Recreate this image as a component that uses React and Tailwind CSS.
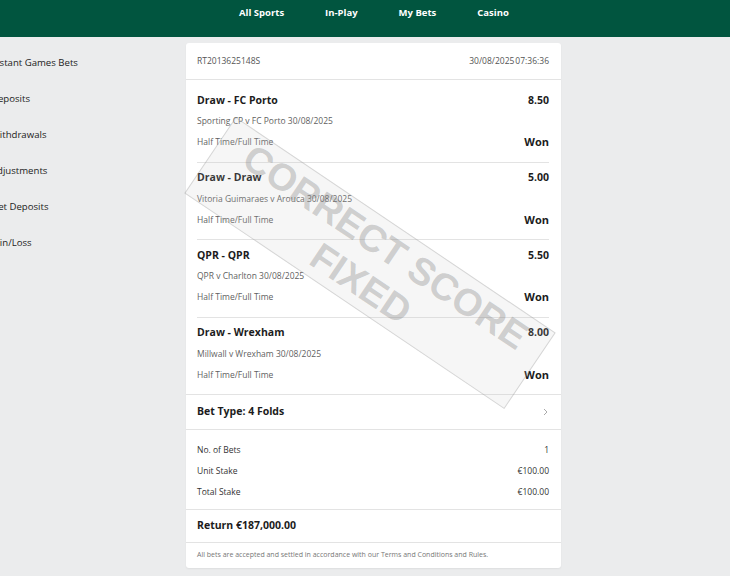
export default function App() {
  const legs = [
    { sel: "Draw - FC Porto", odds: "8.50", ev: "Sporting CP v FC Porto 30/08/2025" },
    { sel: "Draw - Draw", odds: "5.00", ev: "Vitoria Guimaraes v Arouca 30/08/2025" },
    { sel: "QPR - QPR", odds: "5.50", ev: "QPR v Charlton 30/08/2025" },
    { sel: "Draw - Wrexham", odds: "8.00", ev: "Millwall v Wrexham 30/08/2025" },
  ];
  const side = ["Instant Games Bets", "Deposits", "Withdrawals", "Adjustments", "Net Deposits", "Win/Loss"];
  const nav = ["All Sports", "In-Play", "My Bets", "Casino"];
  return (
    <div className="relative w-[730px] h-[576px] overflow-hidden bg-[#ebeced] font-['Open_Sans',sans-serif] text-[#1c1c1c]">
      <header className="h-[37px] bg-[#01553f] flex items-start pl-[239px] pt-[5px] gap-[41px]">
        {nav.map((n) => (
          <span key={n} className="text-white font-bold text-[9.5px] leading-[16px]">{n}</span>
        ))}
      </header>
      <div className="flex">
        <aside className="w-[195px] ml-[-9px] shrink-0 pt-[8px]">
          {side.map((s) => (
            <div key={s} className="h-[36px] flex items-center text-[9.6px] text-[#222]">{s}</div>
          ))}
        </aside>
        <main className="pt-[6px]">
          <div className="w-[375px] bg-white rounded-[3px] shadow-[0_1px_2px_rgba(0,0,0,0.06)]">
            <div className="h-[37px] flex items-center justify-between pl-[11px] pr-[12px] border-b border-[#e3e3e3] text-[8.5px] text-[#555]">
              <span>RT2013625148S</span>
              <span>30/08/2025<span className="ml-[1px]">07:36:36</span></span>
            </div>
            <div className="pl-[11px] pr-[12px] pt-[5px] border-b border-[#e3e3e3]">
              {legs.map((l, i) => (
                <div key={i} className={"pt-[5px] pb-[8.5px] " + (i < 3 ? "border-b border-[#e3e3e3]" : "")}>
                  <div className="h-[21px] flex items-center justify-between text-[10.5px] font-bold">
                    <span>{l.sel}</span>
                    <span>{l.odds}</span>
                  </div>
                  <div className="h-[21px] flex items-center text-[8.5px] text-[#5f5f5f]">{l.ev}</div>
                  <div className="h-[21px] flex items-center justify-between">
                    <span className="text-[8.5px] text-[#5f5f5f]">Half Time/Full Time</span>
                    <span className="text-[11px] font-bold">Won</span>
                  </div>
                </div>
              ))}
            </div>
            <div className="h-[35px] flex items-center justify-between pl-[11px] pr-[12px] border-b border-[#e3e3e3]">
              <span className="text-[10.5px] font-bold">Bet Type: 4 Folds</span>
              <svg width="5" height="8" viewBox="0 0 5 8" className="mr-[1px]">
                <path d="M1 1 L4 4 L1 7" fill="none" stroke="#aaa" strokeWidth="1" />
              </svg>
            </div>
            <div className="pl-[11px] pr-[12px] pt-[10px] pb-[6px] border-b border-[#e3e3e3] text-[8.5px] text-[#333]">
              {[["No. of Bets", "1"], ["Unit Stake", "€100.00"], ["Total Stake", "€100.00"]].map(([a, b]) => (
                <div key={a} className="h-[21px] flex items-center justify-between">
                  <span>{a}</span>
                  <span>{b}</span>
                </div>
              ))}
            </div>
            <div className="h-[33px] flex items-center pl-[11px] border-b border-[#e3e3e3] text-[10.5px] font-bold">
              Return €187,000.00
            </div>
            <div className="h-[25px] flex items-center pl-[11px] text-[7px] text-[#777]">
              All bets are accepted and settled in accordance with our Terms and Conditions and Rules.
            </div>
          </div>
        </main>
      </div>
      <div className="absolute left-[177px] top-[217px] w-[386px] h-[92px] rotate-[34deg] bg-[rgba(200,200,200,0.16)] border border-[rgba(140,140,140,0.3)] flex flex-col items-center justify-center pl-[8px] font-['Liberation_Sans',sans-serif] font-bold text-[38px] leading-[44px] text-[rgba(110,110,110,0.3)]">
        <span>CORRECT SCORE</span>
        <span>FIXED</span>
      </div>
    </div>
  );
}
